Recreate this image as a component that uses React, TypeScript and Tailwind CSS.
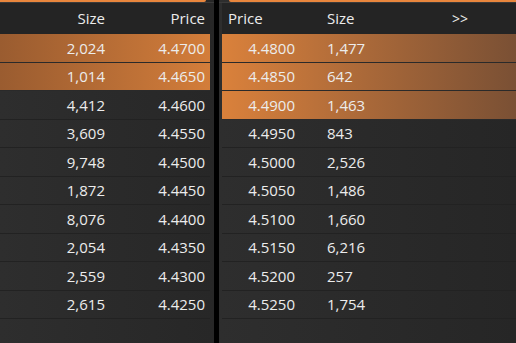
const bids = [
  ["2,024", "4.4700", true],
  ["1,014", "4.4650", true],
  ["4,412", "4.4600", false],
  ["3,609", "4.4550", false],
  ["9,748", "4.4500", false],
  ["1,872", "4.4450", false],
  ["8,076", "4.4400", false],
  ["2,054", "4.4350", false],
  ["2,559", "4.4300", false],
  ["2,615", "4.4250", false],
] as const;

const asks = [
  ["4.4800", "1,477", true],
  ["4.4850", "642", true],
  ["4.4900", "1,463", true],
  ["4.4950", "843", false],
  ["4.5000", "2,526", false],
  ["4.5050", "1,486", false],
  ["4.5100", "1,660", false],
  ["4.5150", "6,216", false],
  ["4.5200", "257", false],
  ["4.5250", "1,754", false],
] as const;

export default function App() {
  return (
    <div
      className="flex h-[343px] w-[516px] overflow-hidden bg-black text-[15px] text-[#ececec]"
      style={{ fontFamily: '"Open Sans", "Noto Sans", sans-serif' }}
    >
      {/* bids */}
      <div className="flex w-[214px] flex-col bg-[#2a2a2a] bg-gradient-to-r from-[#2e2e2e] to-[#272727]">
        <div className="h-[2px] w-[206px] rounded-br-[3px] bg-[#e8863d]" />
        <div className="h-px bg-[#3a3a3a]" />
        <div className="flex h-[31px] w-[210px] items-center bg-[#242424] pr-[5px]">
          <span className="w-[105px] text-right">Size</span>
          <span className="flex-1 text-right">Price</span>
        </div>
        {bids.map(([size, price, hot]) => (
          <div
            key={price}
            className={`flex h-[28.5px] w-[210px] items-center border-b pr-[5px] ${
              hot
                ? "border-[#2a2a2a] bg-gradient-to-r from-[#9a5c30] to-[#d37d3a]"
                : "border-[#222222]"
            }`}
          >
            <span className="w-[105px] text-right">{size}</span>
            <span className="flex-1 text-right">{price}</span>
          </div>
        ))}
      </div>

      <div className="w-[5px]" />

      {/* asks */}
      <div className="flex flex-1 flex-col bg-[#2a2a2a] bg-gradient-to-r from-[#2e2e2e] to-[#262626]">
        <div className="ml-[10px] h-[2px] rounded-bl-[3px] bg-[#e8863d]" />
        <div className="h-px bg-[#3a3a3a]" />
        <div className="ml-[3px] flex h-[31px] items-center bg-[#242424]">
          <span className="w-[105px] pl-[6px]">Price</span>
          <span className="w-[125px]">Size</span>
          <span className="text-[14px]">&gt;&gt;</span>
        </div>
        {asks.map(([price, size, hot]) => (
          <div
            key={price}
            className={`ml-[3px] flex h-[28.5px] items-center border-b ${
              hot
                ? "border-[#2a2a2a] bg-gradient-to-r from-[#da813b] to-[#7a5034]"
                : "border-[#222222]"
            }`}
          >
            <span className="w-[73px] text-right">{price}</span>
            <span className="pl-[32px]">{size}</span>
          </div>
        ))}
      </div>
    </div>
  );
}
